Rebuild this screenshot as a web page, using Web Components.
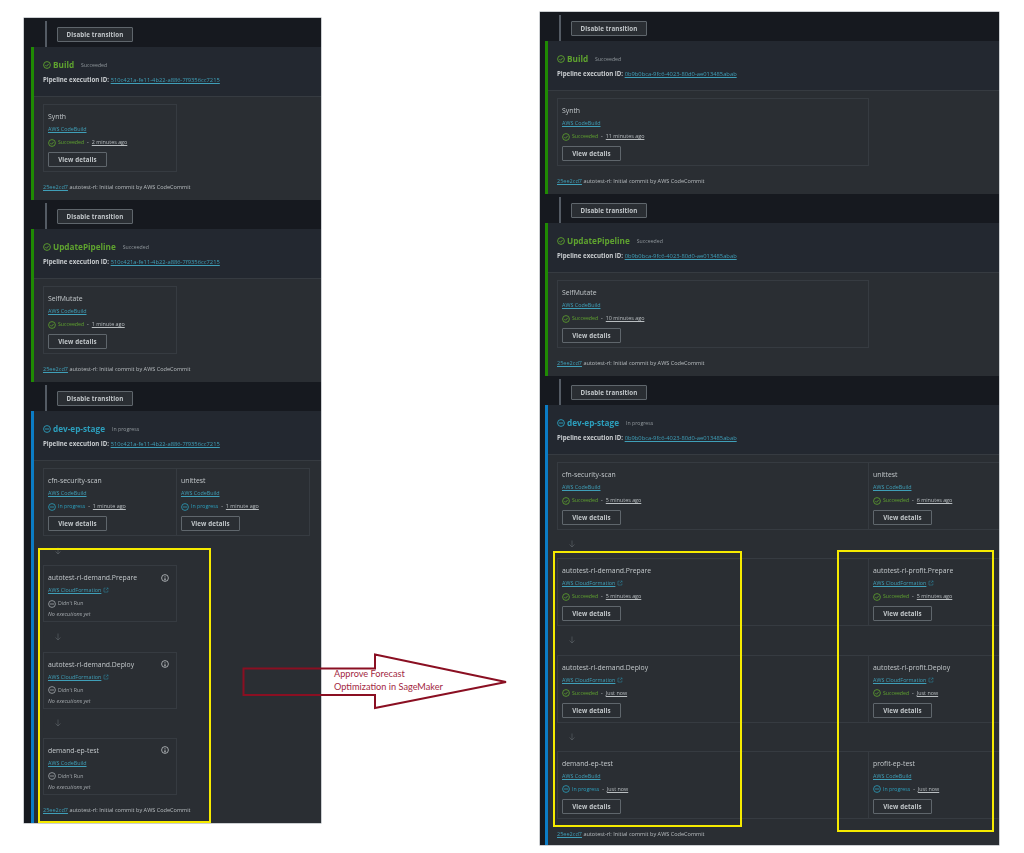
<!DOCTYPE html>
<html lang="en"><head><meta charset="utf-8"><title>Pipeline</title>
<style>
html,body{margin:0;background:#fff;height:853px;overflow:hidden}
body{font-family:"Open Sans","Liberation Sans",sans-serif}
</style></head>
<body>
<compare-page>
  <pipeline-panel style="--w:297px;--top:18px;--inset:7px;--rail:21px;--btn:10px;--cell:134px">
    <stage-transition></stage-transition>
    <pipeline-stage name="Build" status="ok" label="Succeeded" exec="510c421a-fe11-4b22-a886-7f9356cc7215">
      <action-row><pipeline-action name="Synth" provider="AWS CodeBuild" status="ok" label="Succeeded" time="2 minutes ago"></pipeline-action></action-row>
    </pipeline-stage>
    <stage-transition></stage-transition>
    <pipeline-stage name="UpdatePipeline" status="ok" label="Succeeded" exec="510c421a-fe11-4b22-a886-7f9356cc7215">
      <action-row><pipeline-action name="SelfMutate" provider="AWS CodeBuild" status="ok" label="Succeeded" time="1 minute ago"></pipeline-action></action-row>
    </pipeline-stage>
    <stage-transition></stage-transition>
    <pipeline-stage name="dev-ep-stage" status="run" label="In progress" exec="510c421a-fe11-4b22-a886-7f9356cc7215" style="--gap:29.33px">
      <action-row>
        <pipeline-action name="cfn-security-scan" provider="AWS CodeBuild" status="run" label="In progress" time="1 minute ago"></pipeline-action>
        <pipeline-action name="unittest" provider="AWS CodeBuild" status="run" label="In progress" time="1 minute ago"></pipeline-action>
      </action-row>
      <flow-arrow></flow-arrow>
      <action-row><pipeline-action name="autotest-rl-demand.Prepare" provider="AWS CloudFormation" external status="idle" label="Didn't Run" info></pipeline-action></action-row>
      <flow-arrow></flow-arrow>
      <action-row><pipeline-action name="autotest-rl-demand.Deploy" provider="AWS CloudFormation" external status="idle" label="Didn't Run" info></pipeline-action></action-row>
      <flow-arrow></flow-arrow>
      <action-row><pipeline-action name="demand-ep-test" provider="AWS CodeBuild" status="idle" label="Didn't Run" info></pipeline-action></action-row>
    </pipeline-stage>
  </pipeline-panel>
  <pipeline-panel style="--w:459px;--top:12px;--inset:5px;--rail:19px;--btn:10px;--cell:312px;--ml:219px">
    <stage-transition></stage-transition>
    <pipeline-stage name="Build" status="ok" label="Succeeded" exec="0b9b0bca-9fc6-4023-80d0-ae013485abab">
      <action-row><pipeline-action name="Synth" provider="AWS CodeBuild" status="ok" label="Succeeded" time="11 minutes ago"></pipeline-action></action-row>
    </pipeline-stage>
    <stage-transition></stage-transition>
    <pipeline-stage name="UpdatePipeline" status="ok" label="Succeeded" exec="0b9b0bca-9fc6-4023-80d0-ae013485abab">
      <action-row><pipeline-action name="SelfMutate" provider="AWS CodeBuild" status="ok" label="Succeeded" time="10 minutes ago"></pipeline-action></action-row>
    </pipeline-stage>
    <stage-transition></stage-transition>
    <pipeline-stage name="dev-ep-stage" status="run" label="In progress" exec="0b9b0bca-9fc6-4023-80d0-ae013485abab" style="--gap:28.33px;--foot:26px">
      <action-row>
        <pipeline-action name="cfn-security-scan" provider="AWS CodeBuild" status="ok" label="Succeeded" time="5 minutes ago"></pipeline-action>
        <pipeline-action name="unittest" provider="AWS CodeBuild" status="ok" label="Succeeded" time="6 minutes ago"></pipeline-action>
      </action-row>
      <flow-arrow></flow-arrow>
      <action-row>
        <pipeline-action name="autotest-rl-demand.Prepare" provider="AWS CloudFormation" external status="ok" label="Succeeded" time="5 minutes ago"></pipeline-action>
        <pipeline-action name="autotest-rl-profit.Prepare" provider="AWS CloudFormation" external status="ok" label="Succeeded" time="5 minutes ago"></pipeline-action>
      </action-row>
      <flow-arrow></flow-arrow>
      <action-row>
        <pipeline-action name="autotest-rl-demand.Deploy" provider="AWS CloudFormation" external status="ok" label="Succeeded" time="Just now"></pipeline-action>
        <pipeline-action name="autotest-rl-profit.Deploy" provider="AWS CloudFormation" external status="ok" label="Succeeded" time="Just now"></pipeline-action>
      </action-row>
      <flow-arrow></flow-arrow>
      <action-row>
        <pipeline-action name="demand-ep-test" provider="AWS CodeBuild" status="run" label="In progress" time="Just now"></pipeline-action>
        <pipeline-action name="profit-ep-test" provider="AWS CodeBuild" status="run" label="In progress" time="Just now"></pipeline-action>
      </action-row>
    </pipeline-stage>
  </pipeline-panel>
  <highlight-box style="left:38px;top:548px;width:173px;height:275px"></highlight-box>
  <highlight-box style="left:553px;top:551px;width:189px;height:276px"></highlight-box>
  <highlight-box style="left:837px;top:550px;width:157px;height:282px"></highlight-box>
  <callout-arrow>Approve Forecast<br>Optimization in SageMaker</callout-arrow>
</compare-page>
<script>
const ICONS={
 ok:'<circle cx="8" cy="8" r="6.8"/><path d="M4.8 8.2l2.3 2.3 4.2-4.6"/>',
 run:'<circle cx="8" cy="8" r="6.8"/><path d="M4 8h8"/>',
 idle:'<circle cx="8" cy="8" r="6.8"/><path d="M4 8h8"/>',
 info:'<circle cx="8" cy="8" r="6.8"/><path d="M8 7v4.6M6.4 11.6h3.2M8 4v1.6"/>',
 ext:'<path d="M7 3H2.5v10.5H13V9"/><path d="M9.5 2.5h4v4M13.5 2.5L7.5 8.5"/>',
 down:'<path d="M8 1v13M3 9l5 5 5-5"/>'
};
const svg=(n,s,c,w=1.8)=>`<svg width="${s}" height="${s}" viewBox="0 0 16 16" fill="none" stroke="${c}" stroke-width="${w}" style="display:block;flex:none">${ICONS[n]}</svg>`;
const COL={ok:'#5fa32f',run:'#2c9fbd',idle:'#a4a9ad'};
function def(name,render,css){
  customElements.define(name,class extends HTMLElement{
    connectedCallback(){
      if(this.shadowRoot)return;
      const r=this.attachShadow({mode:'open'});
      r.innerHTML=`<style>${css}</style>`+render(this);
    }
  });
}
def('compare-page',()=>`<slot></slot>`,
 `:host{display:flex;position:relative;width:1024px;height:853px;padding-left:24px;box-sizing:border-box;align-items:flex-start;overflow:hidden}`);
def('pipeline-panel',()=>`<slot></slot>`,
 `:host{display:block;flex:none;width:var(--w);margin-top:var(--top);margin-left:var(--ml,0);background:#16191f;overflow:hidden;filter:blur(.5px);box-shadow:0 0 0 .5px #9aa0a5}`);
def('stage-transition',()=>`<div class="rail"></div><button>Disable transition</button>`,
 `:host{display:flex;height:29px;box-sizing:border-box;padding-left:var(--rail)}
  .rail{width:2px;margin-top:3px;background:#545b64}
  button{all:unset;box-sizing:border-box;display:flex;align-items:center;justify-content:center;width:76px;height:15px;margin:9px 0 0 var(--btn);border:1px solid #5f666c;border-radius:1px;background:#2a2e33;color:#c2c7ca;font:700 6.2px "Open Sans",sans-serif;letter-spacing:.1px}`);
def('pipeline-stage',e=>{
  const st=e.getAttribute('status');
  return `<header>
    <div class="t">${svg(st,8,COL[st])}<h3>${e.getAttribute('name')}</h3><small>${e.getAttribute('label')}</small></div>
    <div class="x"><b>Pipeline execution ID:</b> <a>${e.getAttribute('exec')}</a></div>
  </header>
  <div class="b"><slot></slot></div>
  <footer><a>25ee2cd7</a> autotest-rl: Initial commit by AWS CodeCommit</footer>`;
},
 `:host{display:block;margin-left:var(--inset);border-left:3px solid #1f8a03;background:#2a2e33}
  :host([status=run]){border-left-color:#0b7cc5}
  header{height:50px;box-sizing:border-box;background:#232830;border-bottom:1px solid #363b41;padding:11px 9px 0}
  .t{display:flex;align-items:center;height:14px}
  h3{margin:0 0 0 2px;font:700 8.2px/14px "Open Sans",sans-serif;color:${COL.ok}}
  :host([status=run]) h3{color:${COL.run}}
  small{margin-left:7px;font:5.2px "Open Sans",sans-serif;color:#8f969b}
  .x{margin-top:2px;font:6.1px/11px "Open Sans",sans-serif;color:#c9cdd0;white-space:nowrap}
  .x b{font-weight:700}
  a{color:#3f9fb8;text-decoration:underline}
  .x a{font-size:5.8px}
  .b{padding:7px 0 0 9px}
  footer{height:var(--foot,28px);box-sizing:border-box;padding:11px 0 0 9px;font:5.55px/8px "Open Sans",sans-serif;color:#b9bec1;white-space:nowrap}`);
def('action-row',()=>`<slot></slot>`,
 `:host{display:flex;width:max-content}`);
def('pipeline-action',e=>{
  const st=e.getAttribute('status'),time=e.getAttribute('time');
  return `<div class="n"><span>${e.getAttribute('name')}</span>${e.hasAttribute('info')?svg('info',8,'#c9cdd0',1.5):''}</div>
  <div class="p"><a>${e.getAttribute('provider')}</a>${e.hasAttribute('external')?svg('ext',6,'#2e8fa9',1.3):''}</div>
  <div class="s">${svg(st,8,COL[st],1.6)}<span class="l">${e.getAttribute('label')}</span>${time?`<span class="d">-</span><span class="tm">${time}</span>`:''}</div>
  ${time?`<button>View details</button>`:`<div class="no">No executions yet</div>`}`;
},
 `:host{display:block;flex:none;box-sizing:border-box;width:var(--cell);height:68px;padding:7px 4px 0;border:1px solid #363b41}
  :host(:not(:first-child)){margin-left:-1px;width:134px}
  :host([info]){height:57px}
  .n{display:flex;justify-content:space-between;align-items:center;height:9px;padding-right:3px;font:6.85px/9px "Open Sans",sans-serif;color:#c2c7ca;white-space:nowrap}
  .p{display:flex;align-items:center;gap:2px;height:8px;margin-top:4px;font:5.4px/8px "Open Sans",sans-serif;white-space:nowrap}
  a{color:#3f9fb8;text-decoration:underline}
  .s{display:flex;align-items:center;height:9px;margin-top:5px;font:5.2px/9px "Open Sans",sans-serif;white-space:nowrap}
  .l{margin-left:2px;color:${COL.ok}}
  :host([status=run]) .l{color:${COL.run}}
  :host([status=idle]) .l{color:#a4a9ad}
  .d{margin:0 3px;color:#b9bec1}
  .tm{color:#b9bec1;text-decoration:underline;font-size:5.4px}
  button{all:unset;box-sizing:border-box;display:flex;align-items:center;justify-content:center;width:59px;height:15px;margin-top:5px;border:1px solid #5f666c;border-radius:1px;color:#c2c7ca;font:700 6.2px "Open Sans",sans-serif;letter-spacing:.1px}
  .no{margin-top:2px;font:italic 5.5px/8px "Open Sans",sans-serif;color:#a4a9ad}`);
def('flow-arrow',()=>svg('down',8,'#5f666c',1.2),
 `:host{display:flex;align-items:center;height:var(--gap,29px);padding-left:11px}`);
def('highlight-box',()=>``,
 `:host{display:block;position:absolute;box-sizing:border-box;border:2.5px solid #f5ea00;pointer-events:none}`);
def('callout-arrow',()=>`<svg width="270" height="60" viewBox="0 0 270 60"><path d="M1.5 15.5H133V1.5L264 29 133 55V42H1.5Z" fill="none" stroke="#8a0f22" stroke-width="2"/></svg><p><slot></slot></p>`,
 `:host{display:block;position:absolute;left:242px;top:653px;width:270px;height:60px}
  svg{position:absolute;left:0;top:0}
  p{position:absolute;left:92px;top:14px;margin:0;font:9.2px/13px "Lato",sans-serif;color:#a3283f;white-space:nowrap}`);
</script>
</body></html>
